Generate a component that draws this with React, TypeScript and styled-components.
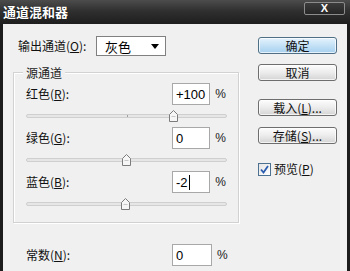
import React from "react";
import styled, { createGlobalStyle } from "styled-components";

const GlobalStyle = createGlobalStyle`
  html, body {
    margin: 0;
    padding: 0;
    background: #1c1c1c;
  }
  body {
    width: 350px;
    height: 271px;
    overflow: hidden;
    font-family: "Noto Sans CJK SC", "Liberation Sans", sans-serif;
  }
`;

const Window = styled.div`
  width: 350px;
  height: 271px;
  display: flex;
  flex-direction: column;
  background: #1c1c1c;
  overflow: hidden;
`;

const TitleBar = styled.div`
  height: 24px;
  flex: none;
  display: flex;
  align-items: center;
  justify-content: space-between;
  padding: 0 5px 0 3px;
  background: linear-gradient(to bottom, #4c4c4c 0%, #303030 45%, #1e1e1e 100%);
`;

const Title = styled.span`
  color: #ffffff;
  font-size: 13px;
  font-weight: 700;
  line-height: 16px;
  text-shadow: 0 0 1px #000;
`;

const CloseButton = styled.div`
  align-self: flex-start;
  margin-top: 2px;
  width: 41px;
  height: 13px;
  box-sizing: border-box;
  border: 1px solid #8c8c8c;
  border-radius: 2px;
  background: linear-gradient(#3c3c3c, #262626);
  color: #ffffff;
  font: bold 11px/11px "Liberation Sans", sans-serif;
  text-align: center;
`;

const Body = styled.div`
  flex: 1;
  margin: 0 3px;
  background: #f0f0f0;
  display: flex;
  padding: 12px 10px 0 10px;
`;

const LeftColumn = styled.div`
  width: 226px;
  flex: none;
`;

const RightColumn = styled.div`
  width: 79px;
  margin-left: 19px;
  padding-top: 1px;
  display: flex;
  flex-direction: column;
`;

const OutputRow = styled.div`
  display: flex;
  align-items: center;
  height: 20px;
  padding-left: 5px;
`;

const Label = styled.span<{ $width: number }>`
  width: ${({ $width }) => $width}px;
  flex: none;
  font-size: 12px;
  line-height: 14px;
  color: #111;
  white-space: nowrap;
`;

const Key = styled.span`
  text-decoration: underline;
`;

const Select = styled.div`
  width: 70px;
  height: 20px;
  box-sizing: border-box;
  border: 1px solid #808080;
  background: #ffffff;
  display: flex;
  align-items: center;
  justify-content: space-between;
  padding: 0 6px 0 8px;
  font-size: 13px;
  color: #000;
`;

const Arrow = styled.span`
  width: 0;
  height: 0;
  border-left: 4px solid transparent;
  border-right: 4px solid transparent;
  border-top: 5px solid #000;
`;

const Group = styled.div`
  margin-top: 16px;
  height: 151px;
  box-sizing: border-box;
  border: 1px solid #d2d2d2;
  box-shadow: inset 1px 1px 0 #ffffff, 1px 1px 0 #ffffff;
  padding: 0 12px;
`;

const Legend = styled.div`
  width: fit-content;
  margin: -7px 0 3px -3px;
  padding: 0 3px;
  background: #f0f0f0;
  font-size: 12px;
  line-height: 14px;
  color: #222;
`;

const ChannelRow = styled.div<{ $indent?: number }>`
  display: flex;
  align-items: center;
  height: 22px;
  padding-left: ${({ $indent }) => $indent ?? 0}px;
`;

const Field = styled.div`
  width: 40px;
  height: 22px;
  box-sizing: border-box;
  border: 1px solid #a8a8a8;
  background: #ffffff;
  padding-left: 3px;
  display: flex;
  align-items: center;
  font: 13px "Liberation Sans", sans-serif;
  color: #000;
`;

const Caret = styled.span`
  width: 1px;
  height: 15px;
  margin-left: 1px;
  background: #000;
`;

const Percent = styled.span`
  margin-left: 5px;
  font: 12px "Liberation Sans", sans-serif;
  color: #222;
`;

const SliderZone = styled.div<{ $indent?: number }>`
  height: 22px;
  box-sizing: border-box;
  padding-top: 9px;
  padding-left: ${({ $indent }) => $indent ?? 0}px;
`;

const Track = styled.div`
  position: relative;
  width: 201px;
  height: 4px;
  box-sizing: border-box;
  border: 1px solid #cfcfcf;
  border-radius: 2px;
  background: #e6e6e6;
`;

const Tick = styled.span`
  position: absolute;
  left: 100px;
  top: 0;
  width: 1px;
  height: 2px;
  background: #a0a0a0;
`;

const Thumb = styled.svg`
  position: absolute;
  top: -5px;
  width: 9px;
  height: 12px;
`;

const ConstantBlock = styled.div`
  margin-top: 21px;
`;

const Button = styled.div<{ $primary?: boolean; $gap: number }>`
  margin-top: ${({ $gap }) => $gap}px;
  height: 17px;
  box-sizing: border-box;
  border: 1px solid ${({ $primary }) => ($primary ? "#4f6f86" : "#6e6e6e")};
  border-radius: 3px;
  background: ${({ $primary }) =>
    $primary
      ? "linear-gradient(#e6f3fc 0%, #c4e1f6 50%, #a6d0ef 100%)"
      : "linear-gradient(#fdfdfd 0%, #ececec 50%, #d4d4d4 100%)"};
  box-shadow: inset 0 0 0 1px rgba(255, 255, 255, 0.7);
  font-size: 12px;
  line-height: 15px;
  text-align: center;
  color: #111;
`;

const PreviewRow = styled.div`
  margin-top: 18px;
  display: flex;
  align-items: center;
  font-size: 12px;
  line-height: 14px;
  color: #111;
`;

const CheckBox = styled.span`
  width: 13px;
  height: 13px;
  box-sizing: border-box;
  margin-right: 3px;
  border: 1px solid #4d7191;
  background: linear-gradient(135deg, #e4e4e4, #ffffff);
  display: flex;
  align-items: center;
  justify-content: center;
`;

const channels = [
  { name: "红色", key: "R", value: 100, text: "+100", caret: false },
  { name: "绿色", key: "G", value: 0, text: "0", caret: false },
  { name: "蓝色", key: "B", value: -2, text: "-2", caret: true },
];

// slider thumb: center sits at 100px, one percent is 0.47px
const thumbLeft = (value: number) => 100 + value * 0.47 - 5;

const Slider: React.FC<{ value: number; indent?: number }> = ({ value, indent }) => (
  <SliderZone $indent={indent}>
    <Track>
      <Tick />
      <Thumb viewBox="0 0 9 12" style={{ left: thumbLeft(value) }}>
        <path
          d="M0.5 11.5 V4.5 L4.5 0.5 L8.5 4.5 V11.5 Z"
          fill="#f6f6f6"
          stroke="#7c7c7c"
          strokeWidth="1"
        />
        <path d="M2.5 6.5 H6.5" stroke="#c8c8c8" strokeWidth="1" />
      </Thumb>
    </Track>
  </SliderZone>
);

const App: React.FC = () => (
  <Window>
    <GlobalStyle />
    <TitleBar>
      <Title>通道混和器</Title>
      <CloseButton>X</CloseButton>
    </TitleBar>
    <Body>
      <LeftColumn>
        <OutputRow>
          <Label $width={78}>
            输出通道(<Key>O</Key>):
          </Label>
          <Select>
            <span>灰色</span>
            <Arrow />
          </Select>
        </OutputRow>

        <Group>
          <Legend>源通道</Legend>
          {channels.map((c) => (
            <React.Fragment key={c.key}>
              <ChannelRow>
                <Label $width={146}>
                  {c.name}(<Key>{c.key}</Key>):
                </Label>
                <Field>
                  {c.text}
                  {c.caret && <Caret />}
                </Field>
                <Percent>%</Percent>
              </ChannelRow>
              <Slider value={c.value} />
            </React.Fragment>
          ))}
        </Group>

        <ConstantBlock>
          <ChannelRow $indent={13}>
            <Label $width={146}>
              常数(<Key>N</Key>):
            </Label>
            <Field>0</Field>
            <Percent>%</Percent>
          </ChannelRow>
          <Slider value={0} indent={13} />
        </ConstantBlock>
      </LeftColumn>

      <RightColumn>
        <Button $primary $gap={0}>确定</Button>
        <Button $gap={10}>取消</Button>
        <Button $gap={18}>
          载入(<Key>L</Key>)...
        </Button>
        <Button $gap={11}>
          存储(<Key>S</Key>)...
        </Button>
        <PreviewRow>
          <CheckBox>
            <svg width="9" height="9" viewBox="0 0 9 9">
              <path d="M1 4.5 L3.5 7.5 L8 1" fill="none" stroke="#2a5db0" strokeWidth="1.8" />
            </svg>
          </CheckBox>
          预览(<Key>P</Key>)
        </PreviewRow>
      </RightColumn>
    </Body>
  </Window>
);

export default App;
